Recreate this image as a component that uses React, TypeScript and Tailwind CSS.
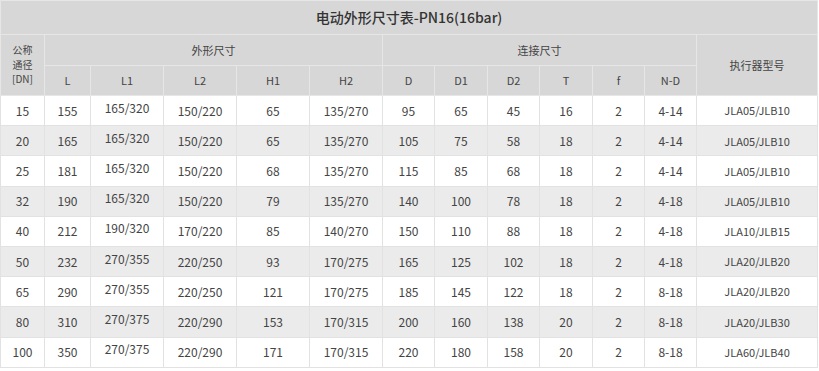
const rows = [
  ["15", "155", "165/320", "150/220", "65", "135/270", "95", "65", "45", "16", "2", "4-14", "JLA05/JLB10"],
  ["20", "165", "165/320", "150/220", "65", "135/270", "105", "75", "58", "18", "2", "4-14", "JLA05/JLB10"],
  ["25", "181", "165/320", "150/220", "68", "135/270", "115", "85", "68", "18", "2", "4-14", "JLA05/JLB10"],
  ["32", "190", "165/320", "150/220", "79", "135/270", "140", "100", "78", "18", "2", "4-18", "JLA05/JLB10"],
  ["40", "212", "190/320", "170/220", "85", "140/270", "150", "110", "88", "18", "2", "4-18", "JLA10/JLB15"],
  ["50", "232", "270/355", "220/250", "93", "170/275", "165", "125", "102", "18", "2", "4-18", "JLA20/JLB20"],
  ["65", "290", "270/355", "220/250", "121", "170/275", "185", "145", "122", "18", "2", "8-18", "JLA20/JLB20"],
  ["80", "310", "270/375", "220/290", "153", "170/315", "200", "160", "138", "20", "2", "8-18", "JLA20/JLB30"],
  ["100", "350", "270/375", "220/290", "171", "170/315", "220", "180", "158", "20", "2", "8-18", "JLA60/JLB40"],
];

const widths = [44, 46, 73, 73, 73, 73, 52, 53, 52, 53, 52, 52, 121];
const outer = ["L", "L1", "L2", "H1", "H2"];
const conn = ["D", "D1", "D2", "T", "f", "N-D"];

export default function App() {
  return (
    <div
      className="w-[819px] h-[371px] bg-white text-[#444]"
      style={{ fontFamily: '"Noto Sans CJK SC", "Noto Sans", sans-serif' }}
    >
      <table className="w-[817px] table-fixed border-collapse text-center">
        <colgroup>
          {widths.map((w, i) => (
            <col key={i} style={{ width: w }} />
          ))}
        </colgroup>
        <thead>
          <tr className="h-[34px] bg-[#d7d7d7]">
            <th colSpan={13} className="border border-[#e6e6e6] text-[14px] font-medium text-[#333]">
              电动外形尺寸表-PN16(16bar)
            </th>
          </tr>
          <tr className="h-[31px] bg-[#d7d7d7] text-[11px] font-normal">
            <th rowSpan={2} className="border border-[#e6e6e6] p-0 text-[10px] font-normal leading-[14.5px]">
              公称
              <br />
              通径
              <br />
              [DN]
            </th>
            <th colSpan={5} className="border border-[#e6e6e6] font-normal">外形尺寸</th>
            <th colSpan={6} className="border border-[#e6e6e6] font-normal">连接尺寸</th>
            <th rowSpan={2} className="border border-[#e6e6e6] font-normal">执行器型号</th>
          </tr>
          <tr className="h-[30px] bg-[#d7d7d7] text-[11px]">
            {[...outer, ...conn].map((h) => (
              <th key={h} className="border border-[#e6e6e6] font-normal">
                {h}
              </th>
            ))}
          </tr>
        </thead>
        <tbody>
          {rows.map((r, i) => (
            <tr key={i} className={`h-[30.2px] ${i % 2 === 1 ? "bg-[#ebebeb]" : "bg-white"}`}>
              {r.map((c, j) => (
                <td
                  key={j}
                  className={`border border-[#e2e2e2] p-0 ${j === 12 ? "text-[11px]" : "text-[12px]"}`}
                >
                  <span className={j === 2 ? "relative -top-[3px]" : ""}>{c}</span>
                </td>
              ))}
            </tr>
          ))}
        </tbody>
      </table>
    </div>
  );
}
